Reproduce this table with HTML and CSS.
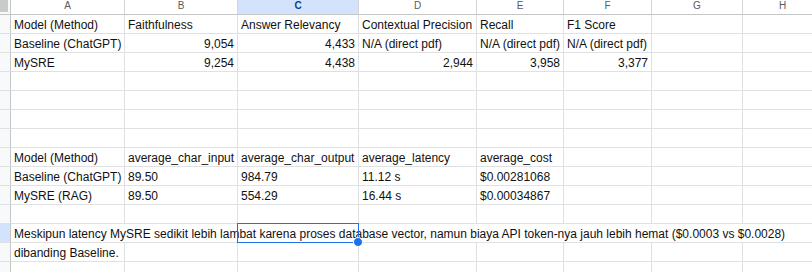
FILE: index.html
```html
<!DOCTYPE html>
<html>
<head>
<meta charset="utf-8">
<link rel="stylesheet" href="styles.css">
</head>
<body>
<div class="sheet">
  <div class="corner"><div class="corner-box"></div></div>
  <div class="colh">A</div><div class="colh">B</div><div class="colh sel">C</div><div class="colh">D</div><div class="colh">E</div><div class="colh">F</div><div class="colh">G</div><div class="colh last">H</div>

  <div class="rowh"></div>
  <div class="c">Model (Method)</div><div class="c">Faithfulness</div><div class="c">Answer Relevancy</div><div class="c">Contextual Precision</div><div class="c">Recall</div><div class="c">F1 Score</div><div class="c"></div><div class="c"></div>

  <div class="rowh"></div>
  <div class="c">Baseline (ChatGPT)</div><div class="c n">9,054</div><div class="c n">4,433</div><div class="c">N/A (direct pdf)</div><div class="c">N/A (direct pdf)</div><div class="c">N/A (direct pdf)</div><div class="c"></div><div class="c"></div>

  <div class="rowh"></div>
  <div class="c">MySRE</div><div class="c n">9,254</div><div class="c n">4,438</div><div class="c n">2,944</div><div class="c n">3,958</div><div class="c n">3,377</div><div class="c"></div><div class="c"></div>

  <div class="rowh"></div>
  <div class="c"></div><div class="c"></div><div class="c"></div><div class="c"></div><div class="c"></div><div class="c"></div><div class="c"></div><div class="c"></div>

  <div class="rowh"></div>
  <div class="c"></div><div class="c"></div><div class="c"></div><div class="c"></div><div class="c"></div><div class="c"></div><div class="c"></div><div class="c"></div>

  <div class="rowh"></div>
  <div class="c"></div><div class="c"></div><div class="c"></div><div class="c"></div><div class="c"></div><div class="c"></div><div class="c"></div><div class="c"></div>

  <div class="rowh"></div>
  <div class="c"></div><div class="c"></div><div class="c"></div><div class="c"></div><div class="c"></div><div class="c"></div><div class="c"></div><div class="c"></div>

  <div class="rowh"></div>
  <div class="c">Model (Method)</div><div class="c">average_char_input</div><div class="c">average_char_output</div><div class="c">average_latency</div><div class="c">average_cost</div><div class="c"></div><div class="c"></div><div class="c"></div>

  <div class="rowh"></div>
  <div class="c">Baseline (ChatGPT)</div><div class="c">89.50</div><div class="c">984.79</div><div class="c">11.12 s</div><div class="c">$0.00281068</div><div class="c"></div><div class="c"></div><div class="c"></div>

  <div class="rowh"></div>
  <div class="c">MySRE (RAG)</div><div class="c">89.50</div><div class="c">554.29</div><div class="c">16.44 s</div><div class="c">$0.00034867</div><div class="c"></div><div class="c"></div><div class="c"></div>

  <div class="rowh"></div>
  <div class="c"></div><div class="c"></div><div class="c"></div><div class="c"></div><div class="c"></div><div class="c"></div><div class="c"></div><div class="c"></div>

  <div class="rowh sel"></div>
  <div class="c span">Meskipun latency MySRE sedikit lebih lambat karena proses database vector, namun biaya API token-nya jauh lebih hemat ($0.0003 vs $0.0028)</div>

  <div class="rowh"></div>
  <div class="c">dibanding Baseline.</div><div class="c"></div><div class="c"></div><div class="c"></div><div class="c"></div><div class="c"></div><div class="c"></div><div class="c"></div>

  <div class="rowh"></div>
  <div class="c"></div><div class="c"></div><div class="c"></div><div class="c"></div><div class="c"></div><div class="c"></div><div class="c"></div><div class="c"></div>

  <div class="selection"><div class="handle"></div></div>
</div>
</body>
</html>
```
FILE: styles.css
```css
html, body {
  margin: 0;
  padding: 0;
  background: #ffffff;
  overflow: hidden;
}
.sheet {
  position: relative;
  display: grid;
  grid-template-columns: 11px 114px 113px 121px 118px 87px 88px 91px 80px;
  grid-template-rows: 15px repeat(13, 19px) 19px;
  font-family: "Liberation Sans", Arial, sans-serif;
  font-size: 12px;
  color: #111111;
  width: 812px;
  height: 272px;
  overflow: hidden;
}
.corner {
  box-sizing: border-box;
  border-right: 1px solid #c4c7c5;
  border-bottom: 1px solid #c4c7c5;
  background: #f8f9fa;
}
.corner-box {
  width: 8px;
  height: 12px;
  background: #c8cacb;
}
.colh {
  box-sizing: border-box;
  border-right: 1px solid #d3d5d6;
  border-bottom: 1px solid #c4c7c5;
  background: #ffffff;
  color: #575a5c;
  font-size: 10px;
  line-height: 12px;
  text-align: center;
}
.colh.sel {
  background: #d3e3fd;
  color: #0b3f91;
  font-weight: bold;
}
.rowh {
  box-sizing: border-box;
  border-right: 1px solid #c4c7c5;
  border-bottom: 1px solid #dfe1e2;
  background: #f8f9fa;
}
.rowh.sel {
  background: #d3e3fd;
}
.c {
  box-sizing: border-box;
  border-right: 1px solid #dfe1e2;
  border-bottom: 1px solid #dfe1e2;
  padding: 1px 3px 0 3px;
  line-height: 18px;
  white-space: nowrap;
  overflow: hidden;
}
.c.n {
  text-align: right;
}
.c.span {
  grid-column: 2 / -1;
  border-right: none;
  overflow: visible;
}
.selection {
  position: absolute;
  left: 237px;
  top: 223px;
  width: 122px;
  height: 20px;
  box-sizing: border-box;
  border: 1px solid #1a73e8;
  pointer-events: none;
}
.handle {
  position: absolute;
  right: -5px;
  bottom: -5px;
  width: 8px;
  height: 8px;
  border-radius: 50%;
  background: #1a73e8;
  border: 1px solid #ffffff;
}
```
